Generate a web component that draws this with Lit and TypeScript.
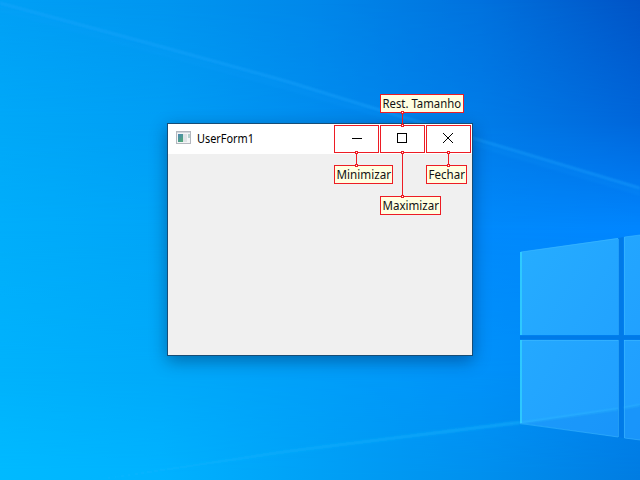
import { LitElement, html, css, svg } from "lit";
import { customElement, property } from "lit/decorators.js";

/* Wallpaper: horizontal colour bands that cross-fade vertically, with beams and glass panes. */
@customElement("desk-wallpaper")
class DeskWallpaper extends LitElement {
  static styles = css`
    :host { display: block; position: absolute; inset: 0; overflow: hidden; }
    .band, svg { position: absolute; inset: 0; width: 640px; height: 480px; }
    .a { background: linear-gradient(90deg, #00a0f6 0, #0096f0 160px, #0087ea 320px, #0072de 480px, #0054c6 640px); }
    .b { background: linear-gradient(90deg, #00a8f8 0, #009ef5 160px, #008cef 320px, #007ce8 480px, #0066da 640px); mask-image: linear-gradient(transparent 0, #000 120px); }
    .c { background: linear-gradient(90deg, #00aefb 0, #00a5f8 160px, #0096f8 320px, #008afc 480px, #0086ff 640px); mask-image: linear-gradient(transparent 120px, #000 230px); }
    .d { background: linear-gradient(90deg, #00b2fc 0, #00aafa 160px, #009ffa 320px, #0092fa 480px, #0080f0 640px); mask-image: linear-gradient(transparent 230px, #000 370px); }
    .e { background: linear-gradient(90deg, #00baff 0, #00b2ff 160px, #00a0f6 320px, #0090ee 480px, #007ce2 640px); mask-image: linear-gradient(transparent 370px, #000 475px); }
  `;
  render() {
    return html`
      <div class="band a"></div><div class="band b"></div><div class="band c"></div>
      <div class="band d"></div><div class="band e"></div>
      <svg viewBox="0 0 640 480">
        <defs>
          <filter id="soft"><feGaussianBlur stdDeviation=".8" /></filter>
          <linearGradient id="glass" x1="0" y1="0" x2="1" y2="1">
            <stop offset="0" stop-color="#26adff" /><stop offset="1" stop-color="#1f9dff" />
          </linearGradient>
          <linearGradient id="ray" x1="0" x2="1">
            <stop offset="0" stop-color="#20b8ff" stop-opacity=".15" /><stop offset="1" stop-color="#20c0ff" stop-opacity=".45" />
          </linearGradient>
        </defs>
        <path d="M0 3L163 47L286 81L380 110L473 138L640 188V196L473 146L286 90L0 12Z" fill="#12a0ff" opacity=".12" filter="url(#soft)" />
        <path d="M0 3L163 47L286 81L380 110L473 138L640 188" fill="none" stroke="#20a8ff" stroke-width="2" opacity=".5" filter="url(#soft)" />
        <path d="M102 480L286 453L520 424V421L286 450L90 480Z" fill="url(#ray)" filter="url(#soft)" />
        <path d="M520 335.500V339.500H640V335.500Z M618.500 238V437L623.500 438V237Z" fill="#007ae8" />
        <path d="M520 252L618 238V335H520Z M624 237L640 235V335H624Z M520 340H618V437L520 423Z M624 340H640V440L624 438Z" fill="url(#glass)" />
        <path d="M523 423L618 409V437Z M624 408L640 405V440L624 438Z" fill="#0e84f0" opacity=".35" />
        <path d="M520 423L618 409M624 408L640 405" stroke="#35c8ff" opacity=".7" fill="none" filter="url(#soft)" />
        <path d="M521 252L618 238.500M624.500 335V237L640 235M520 423.500L618 437M624.500 340V438L640 440M618.500 239V335M618.500 340V437M521 340.500H618M624 340.500H640" fill="none" stroke="#42bcff" opacity=".5" />
        <path d="M521 252V335M521 340V423" stroke="#32d4ff" stroke-width="1.500" />
      </svg>`;
  }
}

@customElement("note-label")
class NoteLabel extends LitElement {
  @property() text = "";
  @property({ type: Number }) width = 0;
  static styles = css`
    :host { display: block; box-sizing: border-box; height: 19px; border: 1px solid #ed1c24; background: #ffffe1; }
    svg { display: block; width: 100%; height: 17px; overflow: visible; }
    text { font: 12.5px "Noto Sans", "Open Sans", sans-serif; fill: #111; }
  `;
  render() {
    return html`<svg><text x="1.500" y="13" textLength=${this.width} lengthAdjust="spacingAndGlyphs">${this.text}</text></svg>`;
  }
}

@customElement("app-root")
class AppRoot extends LitElement {
  static styles = css`
    :host { display: block; position: relative; width: 640px; height: 480px; overflow: hidden; }
    .window { position: absolute; left: 167px; top: 123px; box-sizing: border-box; width: 306px; height: 233px; display: flex; flex-direction: column; border: 1px solid #174d76; background: #f0f0f0; box-shadow: 0 5px 16px rgba(0, 25, 65, .42); }
    .titlebar { display: flex; height: 30px; background: #fff; }
    .caption { display: flex; flex: 1; gap: 5px; padding-left: 8px; }
    .appicon { width: 16px; height: 14px; margin-top: 7px; }
    .title { width: 60px; height: 30px; overflow: visible; }
    .title text { font: 12.5px "Noto Sans", "Open Sans", sans-serif; fill: #000; }
    .buttons { display: flex; gap: 1px; padding: 1px 1px 0 0; }
    .btn { box-sizing: border-box; width: 45px; height: 28px; padding: 0; border: 1px solid #ed1c24; background: #fff; }
    .btn svg { display: block; width: 43px; height: 26px; fill: none; stroke: #000; }
    .wires { position: absolute; inset: 0; }
    note-label { position: absolute; }
    .rest { left: 380px; top: 94px; width: 84px; }
    .min { left: 334px; top: 165px; width: 59px; }
    .max { left: 380px; top: 196px; width: 61px; }
    .close { left: 426px; top: 165px; width: 41px; }
  `;
  wire(x: number, y1: number, y2: number) {
    return svg`<path d="M${x} ${y1}V${y2}" stroke="#ed1c24" />
      <rect x=${x - 1} y=${y1 - 1} width="2" height="2" fill="#fff" stroke="#ed1c24" />
      <rect x=${x - 1} y=${y2 - 1} width="2" height="2" fill="#fff" stroke="#ed1c24" />`;
  }
  render() {
    return html`
      <desk-wallpaper></desk-wallpaper>
      <div class="window">
        <div class="titlebar">
          <div class="caption">
            <svg class="appicon" viewBox="0 0 16 14">
              <defs><linearGradient id="pic" x1="0" y1="0" x2=".6" y2="1"><stop offset="0" stop-color="#4c86b4" /><stop offset="1" stop-color="#4fa67c" /></linearGradient></defs>
              <rect x=".5" y=".5" width="14" height="12" fill="#f4f5f6" stroke="#b4b8bf" />
              <path d="M1 1.500H14" stroke="#d2d6dc" />
              <rect x="2" y="3" width="5" height="8" fill="url(#pic)" />
              <rect x="7" y="3" width="4" height="8" fill="#dfe3e6" />
              <rect x="12" y="3" width="2" height="4" fill="#b5d0cd" />
            </svg>
            <svg class="title"><text x="0" y="19" textLength="57" lengthAdjust="spacingAndGlyphs">UserForm1</text></svg>
          </div>
          <div class="buttons">
            <button class="btn" aria-label="Minimizar"><svg><path d="M17 12.500H27" /></svg></button>
            <button class="btn" aria-label="Maximizar"><svg><rect x="16.500" y="7.500" width="9" height="9" /></svg></button>
            <button class="btn" aria-label="Fechar"><svg><path d="M16 7L26 17M26 7L16 17" /></svg></button>
          </div>
        </div>
      </div>
      <note-label class="rest" text="Rest. Tamanho" width="78.5"></note-label>
      <note-label class="min" text="Minimizar" width="54.5"></note-label>
      <note-label class="max" text="Maximizar" width="56.5"></note-label>
      <note-label class="close" text="Fechar" width="36.5"></note-label>
      <svg class="wires" width="640" height="480">
        ${this.wire(402.5, 112.5, 125.5)}${this.wire(356.5, 152.5, 165.5)}
        ${this.wire(402.5, 152.5, 196.5)}${this.wire(448.5, 152.5, 165.5)}
      </svg>`;
  }
}
